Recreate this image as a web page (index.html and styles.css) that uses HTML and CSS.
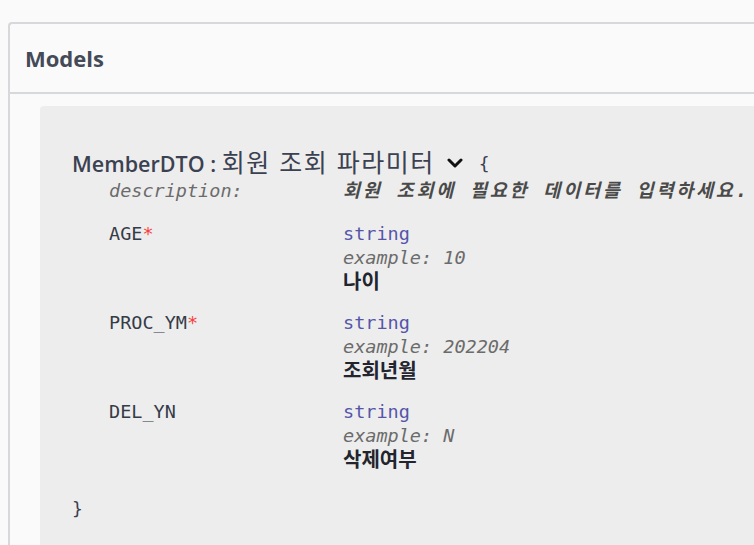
FILE: index.html
```html
<!DOCTYPE html>
<html lang="ko">
<head>
  <meta charset="UTF-8">
  <meta name="viewport" content="width=device-width, initial-scale=1.0">
  <title>Models</title>
  <link rel="stylesheet" href="styles.css">
</head>
<body>
  <section class="models">
    <h4 class="models-head">Models</h4>

    <div class="model-box">
      <div class="model-title">
        <span>MemberDTO : <span class="title-ko">회원 조회 파라미터</span></span>
        <svg class="arrow" width="16" height="10" viewBox="0 0 16 10">
          <polyline points="2,2 8,8 14,2" fill="none" stroke="#111" stroke-width="3" stroke-linecap="round" stroke-linejoin="round"/>
        </svg>
        <span class="brace">{</span>
      </div>

      <table class="props">
        <tr class="desc-row">
          <td class="prop-name">description:</td>
          <td class="desc-val">회원 조회에 필요한 데이터를 입력하세요.</td>
        </tr>
        <tr>
          <td class="prop-name">AGE<span class="star">*</span></td>
          <td>
            <div class="prop-type">string</div>
            <div class="example">example: 10</div>
            <div class="prop-desc">나이</div>
          </td>
        </tr>
        <tr>
          <td class="prop-name">PROC_YM<span class="star">*</span></td>
          <td>
            <div class="prop-type">string</div>
            <div class="example">example: 202204</div>
            <div class="prop-desc">조회년월</div>
          </td>
        </tr>
        <tr>
          <td class="prop-name">DEL_YN</td>
          <td>
            <div class="prop-type">string</div>
            <div class="example">example: N</div>
            <div class="prop-desc">삭제여부</div>
          </td>
        </tr>
      </table>

      <div class="brace brace-close">}</div>
    </div>
  </section>
</body>
</html>
```

FILE: styles.css
```css
body {
  margin: 0;
  background-color: #fafafa;
  font-family: "Open Sans", "Noto Sans CJK KR", sans-serif;
  color: #3b4151;
  overflow: hidden;
}

.models {
  margin: 22px 0 0 8px;
  border: 2px solid #d6d8dc;
  border-right: none;
  border-bottom: none;
  border-radius: 4px 0 0 0;
  height: 600px;
}

.models-head {
  margin: 0;
  height: 68px;
  line-height: 68px;
  padding-left: 15px;
  font-size: 22px;
  font-weight: 700;
  color: #444a58;
  border-bottom: 2px solid #d6d8dc;
}

.model-box {
  margin: 12px 0 0 30px;
  background-color: #ededed;
  border-radius: 4px 0 0 0;
  padding: 40px 0 0 32px;
  height: 500px;
}

.model-title {
  display: flex;
  align-items: center;
  height: 30px;
  font-size: 21.5px;
  font-weight: 600;
  color: #3b4151;
}

.title-ko {
  font-family: "Noto Sans CJK KR", sans-serif;
  font-size: 25px;
  font-weight: 400;
  letter-spacing: 1.5px;
}

.arrow {
  margin-left: 12px;
  margin-top: 4px;
}

.brace {
  font-family: "DejaVu Sans Mono", monospace;
  font-size: 18px;
  font-weight: 400;
  color: #3b4151;
}

.model-title .brace {
  margin-left: 16px;
  margin-top: 4px;
}

.props {
  border-collapse: collapse;
  margin-top: 3px;
  font-family: "DejaVu Sans Mono", "Noto Sans CJK KR", monospace;
  font-size: 18.5px;
}

.props td {
  padding: 19px 0 0 0;
  vertical-align: top;
  line-height: 24px;
}

.props .desc-row td {
  padding-top: 0;
}

.prop-name {
  width: 234px;
  padding-left: 37px !important;
  color: #363b48;
}

.desc-row .prop-name {
  font-style: italic;
  color: #6b6b6b;
}

.desc-val {
  font-style: italic;
  font-weight: 700;
  color: #4a4a4a;
  letter-spacing: 2.8px;
  white-space: nowrap;
}

.star {
  color: #f93e3e;
}

.prop-type {
  color: #5555aa;
}

.example {
  font-style: italic;
  color: #6b6b6b;
}

.prop-desc {
  font-family: "Noto Sans CJK KR", sans-serif;
  font-size: 20px;
  font-weight: 700;
  line-height: 22px;
  color: #22242e;
}

.brace-close {
  margin-top: 27px;
  line-height: 24px;
}
```
